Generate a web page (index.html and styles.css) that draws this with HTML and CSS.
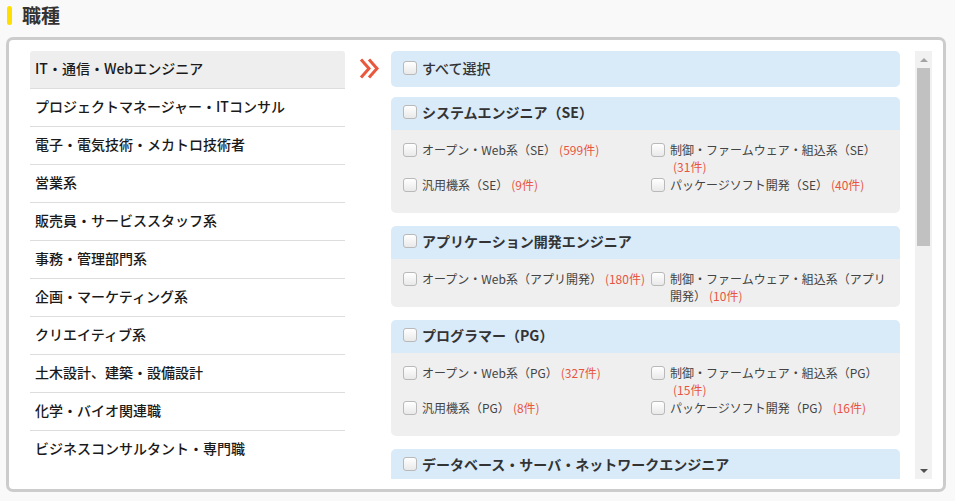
FILE: index.html
```html
<!DOCTYPE html>
<html lang="ja">
<head>
<meta charset="utf-8">
<link rel="stylesheet" href="styles.css">
</head>
<body>
<div class="page">
  <h2 class="heading"><span class="heading-bar"></span><span class="heading-text">職種</span></h2>
  <div class="box">
    <ul class="cats">
      <li class="cat is-active">IT・通信・Webエンジニア</li>
      <li class="cat">プロジェクトマネージャー・ITコンサル</li>
      <li class="cat">電子・電気技術・メカトロ技術者</li>
      <li class="cat">営業系</li>
      <li class="cat">販売員・サービススタッフ系</li>
      <li class="cat">事務・管理部門系</li>
      <li class="cat">企画・マーケティング系</li>
      <li class="cat">クリエイティブ系</li>
      <li class="cat">土木設計、建築・設備設計</li>
      <li class="cat">化学・バイオ関連職</li>
      <li class="cat">ビジネスコンサルタント・専門職</li>
    </ul>
    <div class="arrow-col">
      <svg class="arrow" width="22" height="21" viewBox="0 0 22 21">
        <polyline points="2,1.5 10,10.5 2,19.5" fill="none" stroke="#e9573c" stroke-width="3"/>
        <polyline points="10,1.5 18,10.5 10,19.5" fill="none" stroke="#e9573c" stroke-width="3"/>
      </svg>
    </div>
    <div class="right">
      <div class="scroll-content">
        <div class="all-row"><span class="cb"></span><span class="all-text">すべて選択</span></div>

        <div class="group">
          <div class="group-head"><span class="cb"></span><span class="group-title">システムエンジニア（SE）</span></div>
          <div class="group-body">
            <div class="opt"><span class="cb"></span><span class="opt-text">オープン・Web系（SE）<span class="count">(599件)</span></span></div>
            <div class="opt"><span class="cb"></span><span class="opt-text">制御・ファームウェア・組込系（SE）<span class="count">(31件)</span></span></div>
            <div class="opt"><span class="cb"></span><span class="opt-text">汎用機系（SE）<span class="count">(9件)</span></span></div>
            <div class="opt"><span class="cb"></span><span class="opt-text">パッケージソフト開発（SE）<span class="count">(40件)</span></span></div>
          </div>
        </div>

        <div class="group">
          <div class="group-head"><span class="cb"></span><span class="group-title">アプリケーション開発エンジニア</span></div>
          <div class="group-body">
            <div class="opt"><span class="cb"></span><span class="opt-text">オープン・Web系（アプリ開発）<span class="count">(180件)</span></span></div>
            <div class="opt"><span class="cb"></span><span class="opt-text">制御・ファームウェア・組込系（アプリ開発）<span class="count">(10件)</span></span></div>
          </div>
        </div>

        <div class="group">
          <div class="group-head"><span class="cb"></span><span class="group-title">プログラマー（PG）</span></div>
          <div class="group-body">
            <div class="opt"><span class="cb"></span><span class="opt-text">オープン・Web系（PG）<span class="count">(327件)</span></span></div>
            <div class="opt"><span class="cb"></span><span class="opt-text">制御・ファームウェア・組込系（PG）<span class="count">(15件)</span></span></div>
            <div class="opt"><span class="cb"></span><span class="opt-text">汎用機系（PG）<span class="count">(8件)</span></span></div>
            <div class="opt"><span class="cb"></span><span class="opt-text">パッケージソフト開発（PG）<span class="count">(16件)</span></span></div>
          </div>
        </div>

        <div class="group">
          <div class="group-head"><span class="cb"></span><span class="group-title">データベース・サーバ・ネットワークエンジニア</span></div>
        </div>
      </div>
      <div class="scrollbar">
        <div class="sb-btn"><span class="tri-up"></span></div>
        <div class="sb-track"><div class="sb-thumb"></div></div>
        <div class="sb-btn"><span class="tri-down"></span></div>
      </div>
    </div>
  </div>
</div>
</body>
</html>
```
FILE: styles.css
```css
* { box-sizing: border-box; }
html, body { margin: 0; padding: 0; }
body {
  background: #f9f9f9;
  font-family: "Noto Sans CJK JP", "Noto Sans", sans-serif;
  color: #222;
}
.page { padding: 0 9px 0 6px; }

.heading {
  margin: 0 0 7px 0;
  height: 30px;
  display: flex;
  align-items: center;
  padding-left: 1px;
}
.heading-bar {
  width: 5px;
  height: 19px;
  border-radius: 3px;
  background: #ffdf00;
}
.heading-text {
  margin-left: 10px;
  font-size: 19px;
  line-height: 24px;
  font-weight: 700;
  color: #333;
}

.box {
  display: flex;
  height: 455px;
  border: 3px solid #cccccc;
  border-radius: 7px;
  background: #fff;
  padding: 11px 11px 10px 21px;
}

.cats {
  list-style: none;
  margin: 0;
  padding: 0;
  width: 315px;
  flex: none;
}
.cat {
  height: 38px;
  line-height: 35px;
  border-bottom: 1px solid #dddddd;
  padding-left: 5px;
  font-size: 14px;
  font-weight: 500;
  color: #1a1a1a;
  white-space: nowrap;
}
.cat:last-child { border-bottom: none; }
.cat.is-active {
  background: #eeeeee;
  border-radius: 3px 3px 0 0;
}

.arrow-col {
  width: 46px;
  flex: none;
  padding-left: 14px;
  padding-top: 7px;
}
.arrow { display: block; }

.right {
  flex: 1;
  display: flex;
  gap: 15px;
  height: 428px;
}
.scroll-content {
  width: 509px;
  flex: none;
  overflow: hidden;
  height: 428px;
}

.cb {
  flex: none;
  width: 14px;
  height: 14px;
  border: 1px solid #b9b9b9;
  border-radius: 3px;
  background: linear-gradient(#ffffff, #e9e9e9);
  margin-right: 5px;
}

.all-row {
  height: 36px;
  display: flex;
  align-items: center;
  padding: 0 0 3px 12px;
  background: #d9eaf9;
  border-radius: 5px;
  margin-bottom: 10px;
}
.all-text, .group-title {
  font-size: 14px;
  font-weight: 700;
  color: #333;
  white-space: nowrap;
}
.all-text { font-weight: 500; }

.group { margin-bottom: 13px; }
.group-head {
  height: 33px;
  display: flex;
  align-items: center;
  padding: 0 0 3px 12px;
  background: #d9eaf9;
  border-radius: 5px 5px 0 0;
}
.group-body {
  background: #efefef;
  border-radius: 0 0 5px 5px;
  padding: 11px 10px 2px 12px;
  display: grid;
  grid-template-columns: 248px 1fr;
  grid-auto-rows: 35px;
}
.opt {
  display: flex;
  align-items: flex-start;
}
.opt .cb { margin-top: 2px; margin-right: 5px; }
.opt-text {
  font-size: 12px;
  line-height: 17px;
  color: #444;
}
.count {
  display: inline-block;
  white-space: nowrap;
  color: #e8553f;
  margin-left: 3px;
}

.scrollbar {
  width: 17px;
  flex: none;
  background: #f1f1f1;
  display: flex;
  flex-direction: column;
}
.sb-btn {
  height: 17px;
  display: flex;
  align-items: center;
  justify-content: center;
}
.sb-track {
  flex: 1;
  padding: 0 2px;
}
.sb-thumb {
  height: 178px;
  background: #c1c1c1;
}
.tri-up {
  width: 0; height: 0;
  border-left: 4px solid transparent;
  border-right: 4px solid transparent;
  border-bottom: 4px solid #a3a3a3;
}
.tri-down {
  width: 0; height: 0;
  border-left: 4px solid transparent;
  border-right: 4px solid transparent;
  border-top: 4px solid #505050;
}
```
